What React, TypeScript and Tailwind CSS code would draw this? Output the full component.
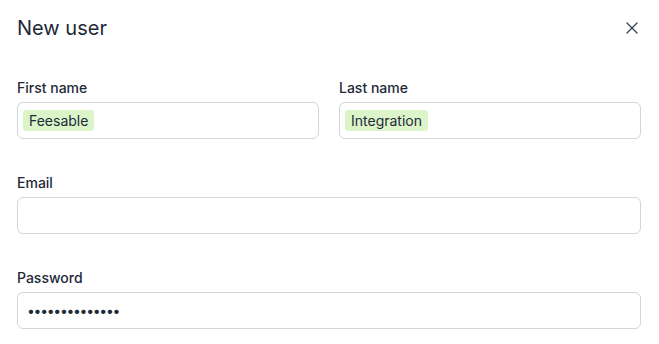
import { X } from "lucide-react";

function Field({
  label,
  children,
  className,
}: {
  label: string;
  children?: React.ReactNode;
  className?: string;
}) {
  return (
    <div className={className}>
      <label className="block text-sm leading-5 font-medium text-gray-800">
        {label}
      </label>
      <div className="mt-1 flex h-[37px] items-center rounded-md border border-gray-300 bg-white px-[5px] text-sm text-gray-800">
        {children}
      </div>
    </div>
  );
}

function Marked({ children }: { children: React.ReactNode }) {
  return (
    <span className="rounded-[3px] bg-[#dbf5c9] px-[6px] py-[3px] leading-[15px]">
      {children}
    </span>
  );
}

export default function App() {
  return (
    <div className="min-h-screen bg-white px-[17px] pr-[18px] pt-[14px] font-['Inter',sans-serif]">
      <div className="flex h-7 items-center justify-between">
        <h1 className="text-xl leading-7 font-normal text-gray-800">
          New user
        </h1>
        <button type="button" className="-mr-[1px] text-gray-700">
          <X size={20} strokeWidth={1.5} />
        </button>
      </div>

      <div className="mt-9 grid grid-cols-2 gap-x-5">
        <Field label="First name">
          <Marked>Feesable</Marked>
        </Field>
        <Field label="Last name">
          <Marked>Integration</Marked>
        </Field>
      </div>

      <Field label="Email" className="mt-[34px]" />

      <Field label="Password" className="mt-[34px]">
        <input
          type="password"
          readOnly
          defaultValue="feesable123456"
          className="w-full bg-transparent pl-[4px] text-sm tracking-[-1.3px] text-gray-800 outline-none"
        />
      </Field>
    </div>
  );
}
